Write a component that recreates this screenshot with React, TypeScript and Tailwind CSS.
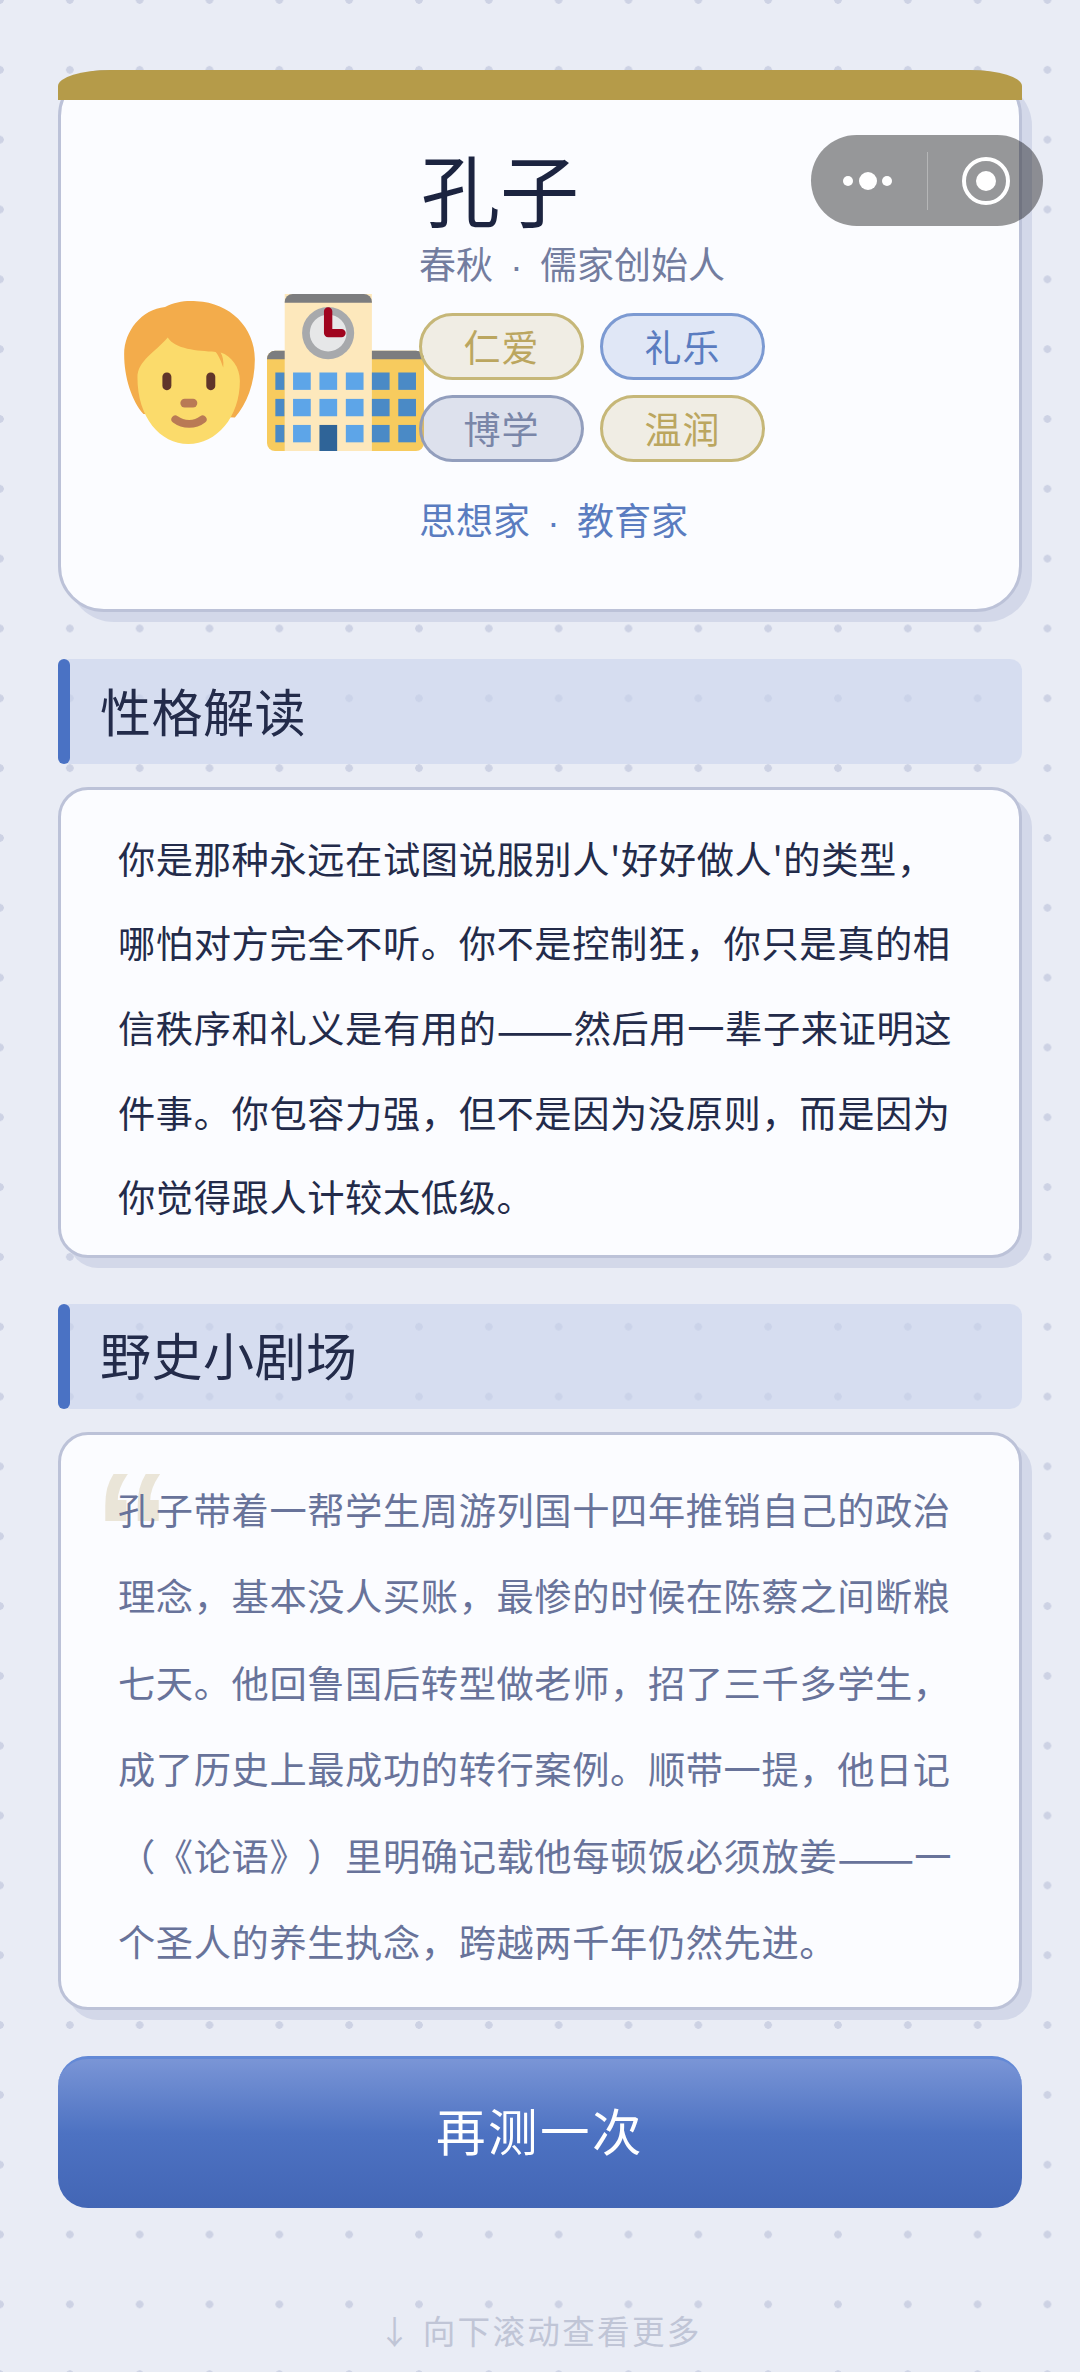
import React from "react";

const FONT = "[font-family:'Noto_Sans_CJK_SC','Noto_Sans',sans-serif] [text-spacing-trim:space-all]";

function PersonEmoji() {
  return (
    <svg viewBox="72 90 393 430" width={131} height={143} className="shrink-0">
      <path
        d="M195 108C225 92 260 88 290 91C390 95 465 170 465 265C465 340 440 400 405 440L130 430C95 390 72 320 72 250C72 180 125 115 195 108Z"
        fill="#F3AC4B"
      />
      <path
        d="M203 200C225 235 290 240 347 243C358 255 365 275 370 290C372 270 368 255 362 245C395 255 420 290 420 330C420 440 350 520 265 520C180 520 112 440 112 320C112 270 165 245 203 200Z"
        fill="#FBDB6B"
      />
      <rect x="187" y="305" width="27" height="53" rx="13" fill="#60352A" />
      <rect x="319" y="305" width="27" height="53" rx="13" fill="#60352A" />
      <rect x="241" y="384" width="51" height="26" rx="13" fill="#B97A55" />
      <path d="M226 446C250 464 285 464 308 446" fill="none" stroke="#B97A55" strokeWidth="24" strokeLinecap="round" />
    </svg>
  );
}

function SchoolEmoji() {
  const light = [580, 659, 738];
  const dark = [816, 895];
  const rows = [305, 384, 462];
  return (
    <svg viewBox="502 70 470 470" width={157} height={157} className="shrink-0">
      <rect x="502" y="240" width="470" height="300" rx="24" fill="#F7CB5E" />
      <path d="M502 265V264A24 24 0 0 1 526 240H948A24 24 0 0 1 972 264V265Z" fill="#7C7D7F" />
      <rect x="555" y="70" width="261" height="470" fill="#FDE8BC" />
      <path d="M555 96V94A24 24 0 0 1 579 70H792A24 24 0 0 1 816 94V96Z" fill="#7C7D7F" />
      <circle cx="685" cy="187" r="78" fill="#A7A9AC" />
      <circle cx="685" cy="187" r="55" fill="#E6E7E8" />
      <path d="M685 122V187H725" fill="none" stroke="#A0041E" strokeWidth="25" strokeLinecap="round" strokeLinejoin="round" />
      {rows.map((y) => (
        <React.Fragment key={y}>
          <rect x="527" y={y} width="27" height="52" fill="#4A8AC6" />
          {light.map((x) =>
            x === 659 && y === 462 ? null : <rect key={x} x={x} y={y} width="53" height="52" fill="#5DA5E8" />
          )}
          {dark.map((x) => (
            <rect key={x} x={x} y={y} width="53" height="52" fill="#4A8AC6" />
          ))}
        </React.Fragment>
      ))}
      <rect x="659" y="462" width="53" height="78" fill="#2F6498" />
    </svg>
  );
}

function Tag({ label, tone }: { label: string; tone: "gold" | "blue" | "gray" }) {
  const tones = {
    gold: "border-[#c6b778] bg-[#b59b49]/15 text-[#bba65f]",
    blue: "border-[#7c9ad2] bg-[#4a70c4]/15 text-[#5a7cc0]",
    gray: "border-[#8d9abb]/95 bg-[#6b7aa3]/20 text-[#7a86a8]",
  };
  return (
    <span
      className={`flex h-[67px] w-[165px] items-center justify-center rounded-full border-[3.5px] text-[37px] tracking-[1px] ${tones[tone]}`}
    >
      {label}
    </span>
  );
}

function SectionTitle({ children }: { children: React.ReactNode }) {
  return (
    <div className="flex h-[105px] items-center rounded-[12px] bg-[#c9d3ec]/60">
      <span className="h-full w-[12px] shrink-0 rounded-full bg-[#4a72c4]" />
      <h2 className="ml-[30px] pb-[3px] text-[51px] leading-none font-normal tracking-[0.5px] text-[#232b4a]">{children}</h2>
    </div>
  );
}

function Capsule() {
  return (
    <div className="absolute top-[135px] left-[811px] z-10 flex h-[91px] w-[232px] items-center rounded-full bg-black/40">
      <div className="flex w-[116px] items-center justify-end gap-[5.5px] pr-[35px]">
        <span className="h-[10px] w-[10px] rounded-full bg-white" />
        <span className="h-[18px] w-[18px] rounded-full bg-white" />
        <span className="h-[10px] w-[10px] rounded-full bg-white" />
      </div>
      <span className="h-[58px] w-px bg-white/30" />
      <div className="flex flex-1 justify-center">
        <span className="flex h-[48px] w-[48px] items-center justify-center rounded-full border-[4.5px] border-white">
          <span className="h-[20px] w-[20px] rounded-full bg-white" />
        </span>
      </div>
    </div>
  );
}

// the CJK font's em dash falls short of a full em, so the pair runs at a larger size
function Dash() {
  return <span className="relative top-[4px] text-[46px] leading-none tracking-normal">——</span>;
}

export default function App() {
  return (
    <div
      className={`relative min-h-[2372px] overflow-hidden bg-[#e9ecf5] bg-[radial-gradient(circle,#cdd2e4_3.5px,transparent_4px)] bg-[length:69.84px_69.84px] bg-[position:-34.92px_-34.92px] px-[58px] pt-[70px] ${FONT}`}
    >
      <Capsule />

      <section className="relative h-[542px] rounded-[46px] border-[3px] border-[#bcc2d8] bg-[#fbfcff] shadow-[10px_10px_0_#d3d8e9]">
        <div className="absolute -top-[3px] -right-[3px] -left-[3px] h-[30px] bg-[#b59b49] [border-radius:52px_52px_0_0/16px_16px_0_0]" />
        <div className="flex pt-[66px]">
          <div className="flex w-[358px] shrink-0 items-start gap-[12px] pt-[162px] pl-[63px]">
            <PersonEmoji />
            <div className="-mt-[7px]">
              <SchoolEmoji />
            </div>
          </div>
          <div className="flex flex-col">
            <h1 className="ml-[2px] text-[79px] leading-[98px] font-normal text-[#1c2440]">孔子</h1>
            <p className="mt-[7px] text-[37px] leading-[46px] whitespace-pre text-[#737d9f] [font-family:'Liberation_Sans','Noto_Sans_CJK_SC',sans-serif] [word-spacing:7px]">
              春秋 · 儒家创始人
            </p>
            <div className="mt-[23px] grid grid-cols-[165px_165px] gap-x-[16px] gap-y-[15px]">
              <Tag label="仁爱" tone="gold" />
              <Tag label="礼乐" tone="blue" />
              <Tag label="博学" tone="gray" />
              <Tag label="温润" tone="gold" />
            </div>
            <p className="mt-[38px] text-[37px] leading-[46px] whitespace-pre text-[#5a7cc0] [font-family:'Liberation_Sans','Noto_Sans_CJK_SC',sans-serif] [word-spacing:7px]">
              思想家 · 教育家
            </p>
          </div>
        </div>
      </section>

      <div className="mt-[47px]">
        <SectionTitle>性格解读</SectionTitle>
      </div>
      <section className="mt-[23px] rounded-[30px] border-[3px] border-[#bcc2d8] bg-[#fbfcff] pt-[25.5px] pr-[61px] pb-[15.5px] pl-[57px] shadow-[10px_10px_0_#d3d8e9]">
        <p className="text-[37.25px] leading-[84.7px] tracking-[0.6px] text-[#232b4a]">
          你是那种永远在试图说服别人'好好做人'的类型，哪怕对方完全不听。你不是控制狂，你只是真的相信秩序和礼义是有用的<Dash />然后用一辈子来证明这件事。你包容力强，但不是因为没原则，而是因为你觉得跟人计较太低级。
        </p>
      </section>

      <div className="mt-[46px]">
        <SectionTitle>野史小剧场</SectionTitle>
      </div>
      <section className="relative mt-[23px] rounded-[30px] border-[3px] border-[#bcc2d8] bg-[#fbfcff] pt-[31px] pr-[61px] pb-[22px] pl-[57px] shadow-[10px_10px_0_#d3d8e9]">
        <span className="absolute top-[9px] left-[38px] text-[200px] leading-none text-[#eae5d8] [-webkit-text-stroke:2px_#eae5d8] [font-family:'Liberation_Sans',sans-serif]">
          “
        </span>
        <p className="relative text-[37.25px] leading-[86.5px] tracking-[0.6px] text-[#68739a]">
          孔子带着一帮学生周游列国十四年推销自己的政治理念，基本没人买账，最惨的时候在陈蔡之间断粮七天。他回鲁国后转型做老师，招了三千多学生，成了历史上最成功的转行案例。顺带一提，他日记（《论语》）里明确记载他每顿饭必须放姜<Dash />一个圣人的养生执念，跨越两千年仍然先进。
        </p>
      </section>

      <button
        type="button"
        className="mt-[46px] flex h-[152px] w-full items-center justify-center rounded-[30px] border-t-[3px] border-[#6389d6] bg-gradient-to-b from-[#7a95d6] via-[#4d72c2] via-50% to-[#4366b5] pb-[5px] text-[49.5px] tracking-[2.5px] text-white"
      >
        再测一次
      </button>

      <p className="mt-[99px] text-center text-[32.6px] leading-[46px] tracking-[2.3px] text-[#c0c5d6]">↓ 向下滚动查看更多</p>
    </div>
  );
}
